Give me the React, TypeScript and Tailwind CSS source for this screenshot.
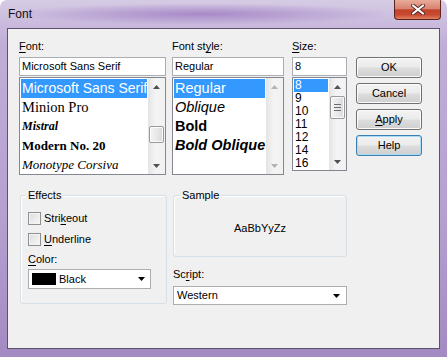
import React from 'react';

const ui = "font-['Liberation_Sans',Arial,sans-serif]";
const serif = "font-['Liberation_Serif','Times_New_Roman',serif]";

function U({ children }: { children: React.ReactNode }) {
  return <span className="underline underline-offset-[2px] decoration-[1px]">{children}</span>;
}

function Arrow({ dir, color }: { dir: 'up' | 'down'; color: string }) {
  return (
    <svg width="7" height="4" viewBox="0 0 7 4">
      <path d={dir === 'up' ? 'M0 4L3.5 0L7 4Z' : 'M0 0L7 0L3.5 4Z'} fill={color} />
    </svg>
  );
}

function ScrollBar({ thumb, grip, disabled }: { thumb?: string; grip?: boolean; disabled?: boolean }) {
  const c = disabled ? '#b3b3b3' : '#505050';
  return (
    <div className="w-[17px] shrink-0 flex flex-col bg-[linear-gradient(to_right,#e4e4e4,#f4f4f4_45%,#f1f1f1)]">
      <div className="h-[17px] flex items-center justify-center">
        <Arrow dir="up" color={c} />
      </div>
      <div className="flex-1 flex flex-col items-center">
        {thumb && (
          <div
            className={`${thumb} w-[15px] rounded-[2px] border border-[#9a9a9a] bg-[linear-gradient(to_right,#f4f4f4,#e8e8e8_50%,#d9d9d9)] shadow-[inset_0_0_0_1px_#fbfbfb] flex flex-col items-center justify-center gap-[2px]`}
          >
            {grip && (
              <>
                <div className="w-[7px] h-[1px] bg-[#6d6d6d]" />
                <div className="w-[7px] h-[1px] bg-[#6d6d6d]" />
                <div className="w-[7px] h-[1px] bg-[#6d6d6d]" />
              </>
            )}
          </div>
        )}
      </div>
      <div className="h-[17px] flex items-center justify-center">
        <Arrow dir="down" color={c} />
      </div>
    </div>
  );
}

function Btn({ children, focus }: { children: React.ReactNode; focus?: boolean }) {
  return (
    <div
      className={`h-[21px] w-[66px] rounded-[3px] border flex items-center justify-center text-[11px] text-black bg-[linear-gradient(to_bottom,#f3f3f3,#ebebeb_48%,#dddddd_52%,#cfcfcf)] ${
        focus
          ? 'border-[#3c7fb1] shadow-[inset_0_0_0_1px_#a8dcf7]'
          : 'border-[#707070] shadow-[inset_0_0_0_1px_#fbfbfb]'
      }`}
    >
      {children}
    </div>
  );
}

function Label({ children }: { children: React.ReactNode }) {
  return <div className="h-[17px] leading-[13px] text-[11px] text-black">{children}</div>;
}

function Field({ value }: { value: string }) {
  return (
    <div className="h-[19px] border border-[#abadb3] bg-white pl-[2px] text-[11px] leading-[17px] whitespace-nowrap overflow-hidden">
      {value}
    </div>
  );
}

function Check({ children }: { children: React.ReactNode }) {
  return (
    <div className="h-[15px] flex items-center gap-[3px] text-[11px]">
      <div className="w-[13px] h-[13px] border border-[#8e8f8f] bg-[linear-gradient(135deg,#dcdcdc,#f8f8f8)] shadow-[inset_0_0_0_1px_#f4f4f4]" />
      <span>{children}</span>
    </div>
  );
}

export default function App() {
  return (
    <div
      className={`${ui} relative w-[447px] h-[357px] overflow-hidden rounded-t-[7px] bg-[linear-gradient(to_bottom,#d6cbe4,#c0aed8_12%,#b6a0d0_60%,#a48ac3)] text-black`}
    >
      {/* title bar */}
      <div className="h-[28px] flex items-center pl-[8px] text-[12px] text-[#111] bg-[radial-gradient(ellipse_at_45%_50%,rgba(135,90,180,0.55),transparent_55%)]">
        Font
      </div>

      {/* close button */}
      <div className="absolute top-0 right-[6px] w-[47px] h-[20px] rounded-b-[4px] border border-t-0 border-[#5b2420] bg-[linear-gradient(to_bottom,#e9ab99,#d88470_45%,#c2432b_52%,#c84a2f_78%,#e2805f)] flex items-center justify-center">
        <svg width="14" height="11" viewBox="0 0 14 11">
          <path d="M2 1.5L12 9.5M12 1.5L2 9.5" stroke="#5a2a24" strokeWidth="4" strokeLinecap="round" />
          <path d="M2 1.5L12 9.5M12 1.5L2 9.5" stroke="#ffffff" strokeWidth="2.2" strokeLinecap="round" />
        </svg>
      </div>

      {/* client area */}
      <div className="ml-[7px] w-[433px] h-[321px] border border-[#5c5270] bg-[#f0f0f0]">
        {/* top row */}
        <div className="flex pt-[11px] pl-[11px] h-[146px]">
          {/* font */}
          <div className="w-[147px]">
            <Label>
              <U>F</U>ont:
            </Label>
            <Field value="Microsoft Sans Serif" />
            <div className="mt-[1px] h-[98px] border border-[#828790] bg-white flex">
              <div className="flex-1 min-w-0 p-[1px] pb-0 overflow-hidden text-[14px]">
                <div className="h-[19px] leading-[19px] pl-[1px] whitespace-nowrap bg-[#3399ff] text-white">
                  Microsoft Sans Serif
                </div>
                <div className={`${serif} h-[19px] leading-[19px] pl-[1px] whitespace-nowrap text-[14.5px]`}>
                  Minion Pro
                </div>
                <div className={`${serif} h-[19px] leading-[19px] pl-[1px] whitespace-nowrap text-[12px] italic font-bold`}>
                  Mistral
                </div>
                <div className={`${serif} h-[19px] leading-[19px] pl-[1px] whitespace-nowrap text-[13px] font-bold`}>
                  Modern No. 20
                </div>
                <div className={`${serif} h-[19px] leading-[19px] pl-[1px] whitespace-nowrap text-[13px] italic`}>
                  Monotype Corsiva
                </div>
              </div>
              <ScrollBar thumb="mt-[31px] h-[17px]" />
            </div>
          </div>

          {/* font style */}
          <div className="w-[112px] ml-[6px]">
            <Label>
              Font st<U>y</U>le:
            </Label>
            <Field value="Regular" />
            <div className="mt-[1px] h-[98px] border border-[#828790] bg-white flex">
              <div className="flex-1 min-w-0 p-[1px] pb-0 overflow-hidden text-[14.5px]">
                <div className="h-[19px] leading-[19px] pl-[1px] whitespace-nowrap bg-[#3399ff] text-white">Regular</div>
                <div className="h-[19px] leading-[19px] pl-[1px] whitespace-nowrap italic">Oblique</div>
                <div className="h-[19px] leading-[19px] pl-[1px] whitespace-nowrap font-bold">Bold</div>
                <div className="h-[19px] leading-[19px] pl-[1px] whitespace-nowrap font-bold italic">Bold Oblique</div>
              </div>
              <ScrollBar disabled />
            </div>
          </div>

          {/* size */}
          <div className="w-[55px] ml-[8px]">
            <Label>
              <U>S</U>ize:
            </Label>
            <Field value="8" />
            <div className="mt-[1px] h-[94px] border border-[#828790] bg-white flex">
              <div className="flex-1 min-w-0 p-[1px] pb-0 overflow-hidden text-[12px]">
                <div className="h-[13px] leading-[13px] pl-[1px] bg-[#3399ff] text-white">8</div>
                {['9', '10', '11', '12', '14', '16'].map((s) => (
                  <div key={s} className="h-[13px] leading-[13px] pl-[1px]">
                    {s}
                  </div>
                ))}
              </div>
              <ScrollBar thumb="mt-[1px] h-[23px]" grip />
            </div>
          </div>

          {/* buttons */}
          <div className="ml-[9px] pt-[17px] flex flex-col gap-[5px]">
            <Btn>OK</Btn>
            <Btn>Cancel</Btn>
            <Btn>
              <U>A</U>pply
            </Btn>
            <Btn focus>Help</Btn>
          </div>
        </div>

        {/* bottom row */}
        <div className="flex mt-[14px] pl-[12px]">
          <fieldset className="w-[147px] h-[115px] border border-[#d5dfe5] rounded-[3px] shadow-[inset_1px_1px_0_#ffffff]">
            <legend className="ml-[5px] px-[2px] text-[11px] leading-[13px] bg-[#f0f0f0]">Effects</legend>
            <div className="pt-[9px] pl-[7px]">
              <Check>
                Stri<U>k</U>eout
              </Check>
              <div className="mt-[6px]">
                <Check>
                  <U>U</U>nderline
                </Check>
              </div>
              <div className="mt-[6px] h-[13px] leading-[13px] text-[11px]">
                <U>C</U>olor:
              </div>
              <div className="mt-[3px] h-[20px] w-[123px] border border-[#abadb3] bg-white flex items-center pl-[3px] pr-[5px] text-[11px]">
                <div className="w-[24px] h-[12px] bg-black" />
                <span className="ml-[3px] flex-1">Black</span>
                <Arrow dir="down" color="#000" />
              </div>
            </div>
          </fieldset>

          <div className="w-[174px] ml-[6px]">
            <fieldset className="h-[68px] border border-[#d5dfe5] rounded-[3px] shadow-[inset_1px_1px_0_#ffffff]">
              <legend className="ml-[6px] px-[2px] text-[11px] leading-[13px] bg-[#f0f0f0]">Sample</legend>
              <div className="h-[53px] flex items-center justify-center text-[11px]">AaBbYyZz</div>
            </fieldset>
            <div className="mt-[11px] h-[13px] leading-[13px] text-[11px]">
              Sc<U>r</U>ipt:
            </div>
            <div className="mt-[5px] h-[19px] border border-[#abadb3] bg-white flex items-center pl-[3px] pr-[6px] text-[11px]">
              <span className="flex-1">Western</span>
              <Arrow dir="down" color="#000" />
            </div>
          </div>
        </div>
      </div>
    </div>
  );
}
